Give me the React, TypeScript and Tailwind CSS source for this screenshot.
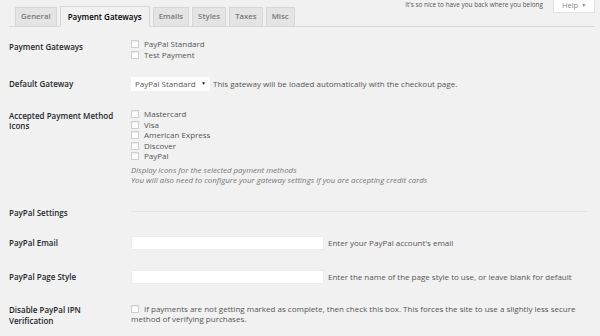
import React from 'react'

const tabs = ['General', 'Payment Gateways', 'Emails', 'Styles', 'Taxes', 'Misc']

function Checkbox() {
  return <span className="inline-block w-[8px] h-[8px] shrink-0 bg-white border border-[#cfcfcf] shadow-[inset_0_1px_1px_rgba(0,0,0,0.08)]" />
}

function Label({ children, className = '' }: { children: React.ReactNode; className?: string }) {
  return (
    <div className={`w-[122px] shrink-0 text-[8px] font-semibold text-[#23282d] ${className}`}>{children}</div>
  )
}

function CheckItem({ text }: { text: string }) {
  return (
    <div className="flex items-center gap-[5px] h-[10.5px]">
      <Checkbox />
      <span>{text}</span>
    </div>
  )
}

export default function App() {
  return (
    <div className="w-[600px] h-[336px] overflow-hidden bg-[#f1f1f1] text-[8px] text-[#555] font-['Open_Sans',sans-serif]">
      {/* header with tabs */}
      <div className="ml-[9px] mr-[5px] h-[27px] flex justify-between items-start border-b border-[#d7d7d7]">
        <div className="flex items-end gap-[3px] pl-[6px] pt-[6px]">
          {tabs.map((t) =>
            t === 'Payment Gateways' ? (
              <div key={t} className="h-[21px] px-[7px] flex items-center text-[8px] font-semibold text-black bg-[#f1f1f1] border border-[#d7d7d7] border-b-[#f1f1f1]">
                {t}
              </div>
            ) : (
              <div key={t} className="h-[20px] px-[5px] flex items-center text-[7.8px] font-semibold text-[#777] bg-[#e4e4e4] border border-[#d7d7d7]">
                {t}
              </div>
            )
          )}
        </div>
        <div className="flex items-start gap-[10px]">
          <span className="text-[6.4px] leading-[10px] text-[#555]">It's so nice to have you back where you belong</span>
          <div className="w-[42px] h-[13px] bg-white border border-t-0 border-[#e2e2e2] flex items-center justify-center gap-[3px] text-[7.5px] text-[#888]">
            <span>Help</span>
            <span className="text-[5px]">▼</span>
          </div>
        </div>
      </div>

      <div className="pl-[9px]">
        {/* Payment Gateways */}
        <div className="flex mt-[12px]">
          <Label className="pt-[3px] leading-[10px]">Payment Gateways</Label>
          <div>
            <CheckItem text="PayPal Standard" />
            <CheckItem text="Test Payment" />
          </div>
        </div>

        {/* Default Gateway */}
        <div className="flex mt-[17px] items-center">
          <Label className="leading-[14px]">Default Gateway</Label>
          <div className="flex items-center">
            <div className="w-[79px] h-[14px] bg-white flex items-center justify-between pl-[4px] pr-[4px]">
              <span>PayPal Standard</span>
              <span className="text-[5px] text-[#222]">▼</span>
            </div>
            <span className="ml-[3px]">This gateway will be loaded automatically with the checkout page.</span>
          </div>
        </div>

        {/* Accepted Payment Method Icons */}
        <div className="flex mt-[18px]">
          <Label className="pt-[2px] leading-[10px]">
            Accepted Payment Method
            <br />
            Icons
          </Label>
          <div>
            <CheckItem text="Mastercard" />
            <CheckItem text="Visa" />
            <CheckItem text="American Express" />
            <CheckItem text="Discover" />
            <CheckItem text="PayPal" />
            <div className="mt-[4.5px] italic text-[7.9px] text-[#777] leading-[9.5px]">
              <p>Display icons for the selected payment methods</p>
              <p>You will also need to configure your gateway settings if you are accepting credit cards</p>
            </div>
          </div>
        </div>

        {/* PayPal Settings */}
        <div className="flex mt-[22px]">
          <Label className="leading-[11px]">PayPal Settings</Label>
          <div className="w-[456px] h-px bg-[#e4e4e4] mt-[4px]" />
        </div>

        {/* PayPal Email */}
        <div className="flex mt-[18px] items-center">
          <Label className="leading-[14px]">PayPal Email</Label>
          <div className="w-[193px] h-[14px] bg-white border border-[#ececec]" />
          <span className="ml-[4px]">Enter your PayPal account's email</span>
        </div>

        {/* PayPal Page Style */}
        <div className="flex mt-[19.5px] items-center">
          <Label className="leading-[14px]">PayPal Page Style</Label>
          <div className="w-[193px] h-[14px] bg-white border border-[#ececec]" />
          <span className="ml-[4px]">Enter the name of the page style to use, or leave blank for default</span>
        </div>

        {/* Disable PayPal IPN Verification */}
        <div className="flex mt-[20px]">
          <Label className="leading-[11px]">
            Disable PayPal IPN
            <br />
            Verification
          </Label>
          <div className="leading-[10.5px] whitespace-nowrap">
            <div className="flex items-center gap-[5px] h-[10.5px]">
              <Checkbox />
              <span>If payments are not getting marked as complete, then check this box. This forces the site to use a slightly less secure</span>
            </div>
            <div>method of verifying purchases.</div>
          </div>
        </div>
      </div>
    </div>
  )
}
